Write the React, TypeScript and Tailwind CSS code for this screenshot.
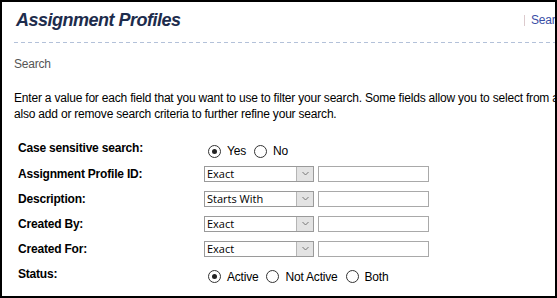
function Radio({ checked }: { checked?: boolean }) {
  return (
    <span className="flex h-[13px] w-[13px] shrink-0 items-center justify-center rounded-full border border-[#333] bg-white">
      {checked && <span className="h-[5px] w-[5px] rounded-full bg-[#222]" />}
    </span>
  );
}

function RadioGroup({ options, value }: { options: string[]; value: string }) {
  return (
    <div className="mt-[6px] flex items-center pl-[4px]">
      {options.map((o) => (
        <label key={o} className="mr-[8px] flex items-center">
          <Radio checked={o === value} />
          <span className="ml-[6px]">{o}</span>
        </label>
      ))}
    </div>
  );
}

function SelectField({ value }: { value: string }) {
  return (
    <div className="flex items-center">
      <div className="flex h-[16px] w-[110px] items-stretch border border-[#9a9a9a] bg-white">
        <span className="flex-1 pl-[2px] font-['Open_Sans',sans-serif] text-[11px] leading-[14px] tracking-normal text-black">
          {value}
        </span>
        <span className="flex w-[17px] items-center justify-center border-l border-[#b5b5b5] bg-[#e3e3e3]">
          <svg width="7" height="5" viewBox="0 0 7 5">
            <path d="M0.5 1 L3.5 4 L6.5 1" fill="none" stroke="#777" strokeWidth="1" />
          </svg>
        </span>
      </div>
      <div className="ml-[4px] h-[16px] w-[111px] border border-[#a9a9a9] bg-white" />
    </div>
  );
}

const rows: { label: string; kind: 'select' | 'radio'; value: string; options?: string[]; h: string }[] = [
  { label: 'Case sensitive search:', kind: 'radio', value: 'Yes', options: ['Yes', 'No'], h: 'h-[26px]' },
  { label: 'Assignment Profile ID:', kind: 'select', value: 'Exact', h: 'h-[25px]' },
  { label: 'Description:', kind: 'select', value: 'Starts With', h: 'h-[25px]' },
  { label: 'Created By:', kind: 'select', value: 'Exact', h: 'h-[25px]' },
  { label: 'Created For:', kind: 'select', value: 'Exact', h: 'h-[25px]' },
  { label: 'Status:', kind: 'radio', value: 'Active', options: ['Active', 'Not Active', 'Both'], h: 'h-[25px]' },
];

export default function App() {
  return (
    <div className="h-[298px] w-[557px] overflow-hidden border-2 border-black bg-white font-['Liberation_Sans',Arial,sans-serif] text-[12px] leading-[16px] tracking-[-0.2px] text-black">
      {/* Header */}
      <div className="flex items-start pt-[8px]">
        <h1 className="w-[520px] shrink-0 pl-[14px] text-[18px] font-bold italic leading-[20px] tracking-[-0.5px] text-[#1d2c4c]">
          Assignment Profiles
        </h1>
        <div className="mt-[2px] flex shrink-0 items-center whitespace-nowrap">
          <span className="ml-[2px] h-[11px] w-px bg-[#dccacd]" />
          <span className="ml-[6px] text-[#3a4ea6]">Search</span>
        </div>
      </div>

      <div className="ml-[12px] mt-[12px] h-px bg-[repeating-linear-gradient(90deg,#b3c1d9_0_4px,transparent_4px_7px)]" />

      <div className="mt-[13px] pl-[12px] text-[#555]">Search</div>

      <p className="mt-[18px] whitespace-nowrap pl-[12px]">
        Enter a value for each field that you want to use to filter your search. Some fields allow you to select from a list. You can
        <br />
        also add or remove search criteria to further refine your search.
      </p>

      <div className="mt-[13px] pl-[16px]">
        {rows.map((r) => (
          <div key={r.label} className={`flex items-center ${r.h}`}>
            <div className="w-[186px] shrink-0 font-bold">{r.label}</div>
            {r.kind === 'select' ? (
              <SelectField value={r.value} />
            ) : (
              <RadioGroup options={r.options ?? []} value={r.value} />
            )}
          </div>
        ))}
      </div>
    </div>
  );
}
